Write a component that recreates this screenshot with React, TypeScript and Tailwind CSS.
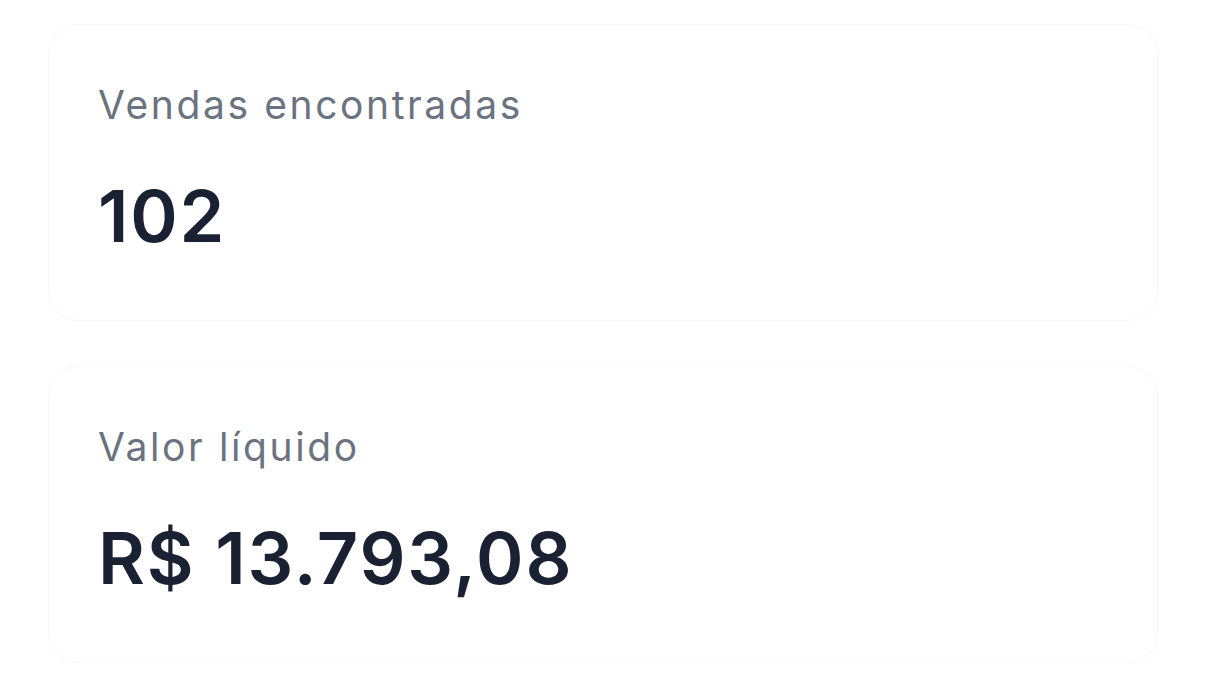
export default function App() {
  const cards = [
    { label: "Vendas encontradas", value: "102" },
    { label: "Valor líquido", value: "R$ 13.793,08" },
  ];

  return (
    <div className="min-h-screen bg-white px-[48px] pt-[24px] font-['Inter','Noto_Sans',sans-serif]">
      <div className="flex w-[1110px] flex-col gap-[45px]">
        {cards.map((c) => (
          <div
            key={c.label}
            className="flex h-[297px] flex-col rounded-[30px] border border-[#f7f7f9] bg-white pl-[49px] pt-[57px]"
          >
            <span className="text-[39px] leading-[46px] tracking-[2.6px] text-[#6b7280]">
              {c.label}
            </span>
            <span className="mt-[48px] text-[72px] font-semibold leading-[80px] tracking-[1.8px] text-[#1a2133]">
              {c.value}
            </span>
          </div>
        ))}
      </div>
    </div>
  );
}
